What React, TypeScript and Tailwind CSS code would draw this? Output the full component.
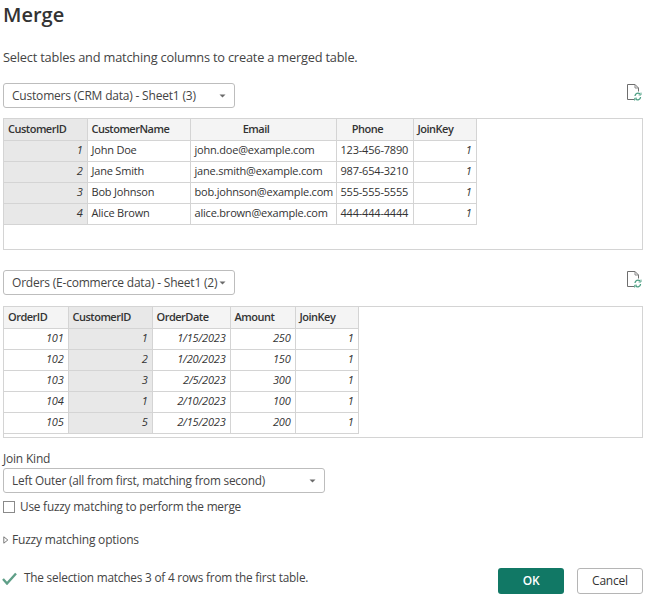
const font = "[font-family:'Open_Sans','Noto_Sans',sans-serif]";

type Col = { name: string; width: number; align?: "center" | "left"; key?: boolean; num?: boolean };

function DataTable({ cols, rows }: { cols: Col[]; rows: string[][] }) {
  const total = cols.reduce((s, c) => s + c.width, 0);
  return (
    <table style={{ width: total }} className="table-fixed border-collapse text-[11px] text-[#333333]">
      <colgroup>
        {cols.map((c) => (
          <col key={c.name} style={{ width: c.width }} />
        ))}
      </colgroup>
      <thead>
        <tr className="h-[21px]">
          {cols.map((c) => (
            <th
              key={c.name}
              className={`border-r border-b border-[#d4d4d4] pl-[4px] font-semibold tracking-[-0.5px] whitespace-nowrap overflow-hidden ${
                c.key ? "bg-[#e8e8e8]" : "bg-[#f4f4f4]"
              } ${c.align === "center" ? "text-center pr-[18px]" : "text-left pr-[4px]"}`}
            >
              {c.name}
            </th>
          ))}
        </tr>
      </thead>
      <tbody>
        {rows.map((r, ri) => (
          <tr key={ri} className="h-[21px]">
            {r.map((v, i) => (
              <td
                key={i}
                className={`border-r border-b border-[#d4d4d4] px-[4px] whitespace-nowrap overflow-hidden ${
                  cols[i].key ? "bg-[#e8e8e8]" : "bg-white"
                } ${cols[i].num ? "text-right italic" : "text-left"}`}
              >
                {v}
              </td>
            ))}
          </tr>
        ))}
      </tbody>
    </table>
  );
}

function Caret() {
  return (
    <svg width="7" height="4" viewBox="0 0 7 4" className="shrink-0">
      <path d="M0.5 0.5h6L3.5 3.5z" fill="#6b6b6b" />
    </svg>
  );
}

function Select({ label, width, size }: { label: string; width: number; size: "a" | "b" }) {
  return (
    <div
      style={{ width }}
      className={`h-[25px] flex items-center justify-between pl-[8px] pr-[8px] border border-[#bdbdbd] rounded-[3px] bg-white text-[#444444] whitespace-nowrap ${
        size === "a" ? "text-[12px]" : "text-[11.8px]"
      }`}
    >
      <span>{label}</span>
      <Caret />
    </div>
  );
}

function RefreshIcon() {
  return (
    <svg width="16" height="18" viewBox="0 0 16 18" fill="none">
      <path d="M8 16.5H1.5V1.5H9l3.5 3.5v3.5" stroke="#6e6e6e" strokeWidth="1" />
      <path d="M9 1.5V5h3.5" stroke="#8a8a8a" strokeWidth="1" />
      <path d="M9 13a3 3 0 0 1 5-2" stroke="#4c9f83" strokeWidth="1.3" />
      <path d="M14.6 14a3 3 0 0 1-5 2" stroke="#4c9f83" strokeWidth="1.3" />
      <path d="M15 9.6V12h-2.4M8.6 17.6V15.2H11" stroke="#4c9f83" strokeWidth="0.9" />
    </svg>
  );
}

const customerCols: Col[] = [
  { name: "CustomerID", width: 83, key: true, num: true },
  { name: "CustomerName", width: 103 },
  { name: "Email", width: 146, align: "center" },
  { name: "Phone", width: 77, align: "center" },
  { name: "JoinKey", width: 63, num: true },
];
const customerRows = [
  ["1", "John Doe", "john.doe@example.com", "123-456-7890", "1"],
  ["2", "Jane Smith", "jane.smith@example.com", "987-654-3210", "1"],
  ["3", "Bob Johnson", "bob.johnson@example.com", "555-555-5555", "1"],
  ["4", "Alice Brown", "alice.brown@example.com", "444-444-4444", "1"],
];
const orderCols: Col[] = [
  { name: "OrderID", width: 64, num: true },
  { name: "CustomerID", width: 84, key: true, num: true },
  { name: "OrderDate", width: 78, num: true },
  { name: "Amount", width: 65, num: true },
  { name: "JoinKey", width: 63, num: true },
];
const orderRows = [
  ["101", "1", "1/15/2023", "250", "1"],
  ["102", "2", "1/20/2023", "150", "1"],
  ["103", "3", "2/5/2023", "300", "1"],
  ["104", "1", "2/10/2023", "100", "1"],
  ["105", "5", "2/15/2023", "200", "1"],
];

export default function App() {
  return (
    <div className={`${font} w-[648px] h-[601px] overflow-hidden bg-white pl-[3px] pr-[5px] text-[#333333] tracking-[-0.2px]`}>
      <h1 className="text-[20px] leading-[28px] font-semibold text-[#333333] pt-[1px] h-[29px] tracking-normal">Merge</h1>
      <p className="mt-[19px] text-[12.8px] leading-[18px] text-[#444444]">
        Select tables and matching columns to create a merged table.
      </p>

      <div className="mt-[17px] flex items-start justify-between">
        <Select label="Customers (CRM data) - Sheet1 (3)" width={232} size="a" />
        <div className="pr-[1px]"><RefreshIcon /></div>
      </div>
      <div className="mt-[10px] h-[132px] border border-[#d4d4d4] overflow-hidden">
        <DataTable cols={customerCols} rows={customerRows} />
      </div>

      <div className="mt-[20px] flex items-start justify-between">
        <Select label="Orders (E-commerce data) - Sheet1 (2)" width={232} size="a" />
        <div className="pr-[1px]"><RefreshIcon /></div>
      </div>
      <div className="mt-[11px] h-[132px] border border-[#d4d4d4] overflow-hidden">
        <DataTable cols={orderCols} rows={orderRows} />
      </div>

      <div className="mt-[13px] text-[12px] leading-[16px] text-[#444444]">Join Kind</div>
      <div className="mt-[1px]">
        <Select label="Left Outer (all from first, matching from second)" width={322} size="b" />
      </div>

      <label className="mt-[5px] flex items-center gap-[5px] h-[18px] text-[11.8px] text-[#444444]">
        <span className="w-[12px] h-[12px] border border-[#8a8a8a] bg-white" />
        Use fuzzy matching to perform the merge
      </label>

      <div className="mt-[15px] flex items-center gap-[3px] h-[18px] text-[12px] text-[#444444]">
        <svg width="6" height="8" viewBox="0 0 6 8" fill="none">
          <path d="M0.8 0.8L4.8 4L0.8 7.2z" stroke="#6b6b6b" strokeWidth="0.9" />
        </svg>
        Fuzzy matching options
      </div>

      <div className="mt-[19px] flex items-center justify-between">
        <div className="flex items-center gap-[7px] text-[11.8px] text-[#444444] -mt-[6px] -ml-[1px]">
          <svg width="15" height="13" viewBox="0 0 15 13" fill="none">
            <path d="M1 7l4 4.5L14 1.5" stroke="#5f9f88" strokeWidth="2.4" />
          </svg>
          The selection matches 3 of 4 rows from the first table.
        </div>
        <div className="flex gap-[13px]">
          <button className="w-[66px] h-[26px] rounded-[3px] bg-[#117865] text-white text-[12px] font-semibold">OK</button>
          <button className="w-[66px] h-[26px] rounded-[3px] border border-[#b5b5b5] bg-white text-[#333333] text-[12px]">Cancel</button>
        </div>
      </div>
    </div>
  );
}
